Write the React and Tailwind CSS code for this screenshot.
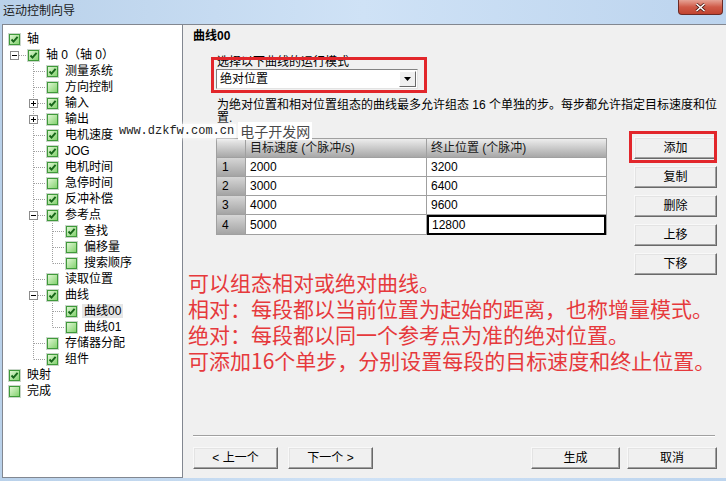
import React from 'react'

const rows = [
    { label: '轴', level: 0, on: true, guides: [] },
    { label: '轴 0（轴 0）', level: 1, on: true, guides: ['h'], exp: '-' },
    { label: '测量系统', level: 2, on: true, guides: ['', 'tee'] },
    { label: '方向控制', level: 2, on: false, guides: ['', 'tee'] },
    { label: '输入', level: 2, on: true, guides: ['', 'tee'], exp: '+' },
    { label: '输出', level: 2, on: false, guides: ['', 'tee'], exp: '+' },
    { label: '电机速度', level: 2, on: true, guides: ['', 'tee'] },
    { label: 'JOG', level: 2, on: true, guides: ['', 'tee'] },
    { label: '电机时间', level: 2, on: true, guides: ['', 'tee'] },
    { label: '急停时间', level: 2, on: false, guides: ['', 'tee'] },
    { label: '反冲补偿', level: 2, on: true, guides: ['', 'tee'] },
    { label: '参考点', level: 2, on: true, guides: ['', 'tee'], exp: '-' },
    { label: '查找', level: 3, on: true, guides: ['', 'pipe', 'tee'] },
    { label: '偏移量', level: 3, on: false, guides: ['', 'pipe', 'tee'] },
    { label: '搜索顺序', level: 3, on: false, guides: ['', 'pipe', 'ell'] },
    { label: '读取位置', level: 2, on: false, guides: ['', 'tee'] },
    { label: '曲线', level: 2, on: true, guides: ['', 'tee'], exp: '-' },
    { label: '曲线00', level: 3, on: true, guides: ['', 'pipe', 'tee'], selected: true },
    { label: '曲线01', level: 3, on: false, guides: ['', 'pipe', 'ell'] },
    { label: '存储器分配', level: 2, on: false, guides: ['', 'tee'] },
    { label: '组件', level: 2, on: true, guides: ['', 'ell'] },
    { label: '映射', level: 0, on: true, guides: [] },
    { label: '完成', level: 0, on: false, guides: [] },
]

const steps = [
    ['1', '2000', '3200'],
    ['2', '3000', '6400'],
    ['3', '4000', '9600'],
    ['4', '5000', '12800'],
]

const notes = [
    '可以组态相对或绝对曲线。',
    '相对：每段都以当前位置为起始的距离，也称增量模式。',
    '绝对：每段都以同一个参考点为准的绝对位置。',
    '可添加16个单步，分别设置每段的目标速度和终止位置。',
]

const dot = { stroke: '#a0a0a0', strokeDasharray: '1 1' }

const Guide = ({ type, exp }) => (
    <svg width="19" height="16" className="shrink-0">
        {(type === 'tee' || type === 'pipe') && <line x1="6.5" y1="0" x2="6.5" y2="16" {...dot} />}
        {type === 'ell' && <line x1="6.5" y1="0" x2="6.5" y2="8.5" {...dot} />}
        {(type === 'tee' || type === 'ell' || type === 'h') && <line x1="7" y1="8.5" x2="19" y2="8.5" {...dot} />}
        {exp && (
            <g>
                <rect x="2.5" y="4.5" width="8" height="8" fill="#fff" stroke="#8c8c8c" />
                <line x1="4" y1="8.5" x2="9" y2="8.5" stroke="#000" />
                {exp === '+' && <line x1="6.5" y1="6" x2="6.5" y2="11" stroke="#000" />}
            </g>
        )}
    </svg>
)

const Check = ({ on }) => (
    <svg width="13" height="13" viewBox="0 0 13 13">
        <defs>
            <linearGradient id="cbfill" x1="0" y1="0" x2="1" y2="1">
                <stop offset="0" stopColor="#e4f8d8" />
                <stop offset="1" stopColor="#7fd06a" />
            </linearGradient>
        </defs>
        <rect x="0.5" y="0.5" width="12" height="12" fill="#fff" stroke="#c9d6c9" />
        <rect x="1.5" y="1.5" width="10" height="10" fill="url(#cbfill)" stroke="#3f9a3a" />
        {on && <path d="M3.5 6.5 L5.5 8.6 L9.6 3.8" fill="none" stroke="#17661a" strokeWidth="1.9" />}
    </svg>
)

const btn =
    'flex items-center justify-center h-[22px] bg-[#f0f0f0] border border-t-[#f8f8f8] border-l-[#f8f8f8] border-r-[#696969] border-b-[#696969] shadow-[inset_-1px_-1px_0_#a0a0a0,inset_1px_1px_0_#e3e3e3] text-[12px] leading-none text-black'

const App = () => {
    return (
        <div className="relative w-[726px] h-[481px] overflow-hidden flex flex-col bg-linear-to-r from-[#b9d1ea] via-[#cfe2f6] to-[#bcd4ee] font-['Liberation_Sans','Noto_Sans_CJK_SC',sans-serif] text-black">
            {/* title bar */}
            <div className="h-[24px] shrink-0 flex items-start justify-between">
                <div className="pl-[3px] pt-[4px] text-[12px] leading-[14px] text-[#1a1a1a]">运动控制向导</div>
                <div className="mr-[3px] w-[45px] h-[15px] rounded-b-[4px] border border-t-0 border-[#6b2a25] bg-linear-to-b from-[#e5a295] via-[#cf5a48] to-[#c1432f] flex items-center justify-center">
                    <svg width="11" height="9" viewBox="0 0 11 9">
                        <path d="M1.5 1 L9.5 8 M9.5 1 L1.5 8" stroke="#4a1a14" strokeWidth="3" />
                        <path d="M1.5 1 L9.5 8 M9.5 1 L1.5 8" stroke="#fff" strokeWidth="1.6" />
                    </svg>
                </div>
            </div>

            <div className="flex-1 flex ml-[2px] mr-[3px] mb-[3px] min-h-0">
                {/* tree */}
                <div className="w-[181px] shrink-0 bg-white border border-[#828790] pt-[6px] pl-[5px]">
                    {rows.map((r) => (
                        <div key={r.label} className="flex items-center h-[16px]">
                            {r.guides.map((g, i) => (
                                <Guide key={i} type={g} exp={i === r.guides.length - 1 ? r.exp : null} />
                            ))}
                            <div className="w-[19px] shrink-0 flex items-center">
                                <Check on={r.on} />
                            </div>
                            <span
                                className={
                                    'text-[12px] leading-[14px] whitespace-nowrap ' +
                                    (r.selected ? 'bg-[#e6e6e6] -ml-[2px] px-[2px]' : '')
                                }
                            >
                                {r.label}
                            </span>
                        </div>
                    ))}
                </div>

                {/* right page */}
                <div className="flex-1 flex flex-col bg-[#f0f0f0] border-t border-[#828790] pl-[10px] pr-[9px] pt-[4px] pb-[9px]">
                    <h2 className="text-[12px] font-bold leading-[14px]">曲线00</h2>

                    <div className="ml-[24px] mt-[12px] text-[12px] leading-[14px]">选择以下曲线的运行模式</div>
                    <div className="ml-[23px] mt-0 w-[202px] h-[20px] bg-white border border-t-[#828282] border-l-[#828282] border-r-[#e3e3e3] border-b-[#e3e3e3] flex items-center">
                        <span className="flex-1 pl-[3px] text-[12px] leading-none">绝对位置</span>
                        <div className="w-[17px] h-[16px] mr-px bg-[#f0f0f0] border border-t-white border-l-white border-r-[#696969] border-b-[#696969] flex items-center justify-center">
                            <svg width="7" height="4" viewBox="0 0 7 4">
                                <path d="M0 0 H7 L3.5 4 Z" fill="#000" />
                            </svg>
                        </div>
                    </div>

                    <p className="ml-[24px] mt-[10px] text-[12px] leading-[13px] whitespace-nowrap">
                        为绝对位置和相对位置组态的曲线最多允许组态 16 个单独的步。每步都允许指定目标速度和位
                        <br />
                        置.
                    </p>

                    <div className="flex mt-[12px]">
                        <div className="w-[438px] shrink-0 flex flex-col">
                            <div className="ml-[23px] mt-px w-[391px] border border-[#a0a0a0] bg-white text-[12px] leading-none">
                                <div className="flex h-[19px] border-b border-[#a0a0a0]">
                                    <div className="w-[29px] border-r border-[#a0a0a0] bg-linear-to-b from-[#ededed] to-[#a8a8a8]" />
                                    <div className="w-[181px] border-r border-[#a0a0a0] bg-linear-to-b from-[#ededed] to-[#a8a8a8] flex items-center pl-[4px] text-[#1a1a1a]">
                                        目标速度 (个脉冲/s)
                                    </div>
                                    <div className="flex-1 bg-linear-to-b from-[#ededed] to-[#a8a8a8] flex items-center pl-[4px] text-[#1a1a1a]">
                                        终止位置 (个脉冲)
                                    </div>
                                </div>
                                {steps.map((s, i) => (
                                    <div key={s[0]} className={'flex h-[19px] ' + (i < steps.length - 1 ? 'border-b border-[#a0a0a0]' : '')}>
                                        <div className="w-[29px] border-r border-[#a0a0a0] bg-linear-to-b from-[#d6d6d6] to-[#a4a4a4] flex items-center pl-[5px]">
                                            {s[0]}
                                        </div>
                                        <div className="w-[181px] border-r border-[#a0a0a0] flex items-center pl-[4px]">{s[1]}</div>
                                        {i === steps.length - 1 ? (
                                            <div className="flex-1 border-2 border-black -mb-px flex items-center pl-[3px]">{s[2]}</div>
                                        ) : (
                                            <div className="flex-1 flex items-center pl-[4px]">{s[2]}</div>
                                        )}
                                    </div>
                                ))}
                            </div>

                            <div className="-ml-[5px] mt-[34px] flex flex-col text-[21px] text-[#e6393c] whitespace-nowrap font-['Noto_Sans_CJK_SC',sans-serif]">
                                {notes.map((t) => (
                                    <div key={t} className="h-[26px] leading-[26px] overflow-visible">
                                        {t}
                                    </div>
                                ))}
                            </div>
                        </div>

                        <div className="w-[83px] ml-auto flex flex-col gap-[7px]">
                            <button className={btn}>添加</button>
                            <button className={btn}>复制</button>
                            <button className={btn}>删除</button>
                            <button className={btn}>上移</button>
                            <button className={btn}>下移</button>
                        </div>
                    </div>

                    <div className="flex-1" />

                    <div className="mr-[2px] border-t border-[#a0a0a0] border-b border-b-white" />
                    <div className="flex mt-[10px]">
                        <button className={btn + ' w-[85px]'}>&lt; 上一个</button>
                        <button className={btn + ' w-[85px] ml-[10px]'}>下一个 &gt;</button>
                        <button className={btn + ' w-[89px] ml-auto'}>生成</button>
                        <button className={btn + ' w-[90px] ml-[7px]'}>取消</button>
                    </div>
                </div>
            </div>

            {/* annotation boxes */}
            <div className="absolute left-[211px] top-[57px] w-[216px] h-[36px] border-[3px] border-[#e2262b]" />
            <div className="absolute left-[629px] top-[131px] w-[88px] h-[32px] border-[3px] border-[#e2262b]" />

            {/* watermark */}
            <div className="absolute left-[117px] top-[122px] flex items-center">
                <span className="bg-white/85 px-[2px] text-[12px] leading-[14px] text-[#222] font-['Liberation_Mono',monospace] shadow-[0_0_4px_rgba(255,255,255,0.9)]">
                    www.dzkfw.com.cn
                </span>
                <span className="ml-[2px] bg-white px-[2px] text-[14px] leading-[18px] text-[#4a4a4a] font-['Noto_Sans_CJK_SC',sans-serif]">
                    电子开发网
                </span>
            </div>
        </div>
    )
}

export default App
